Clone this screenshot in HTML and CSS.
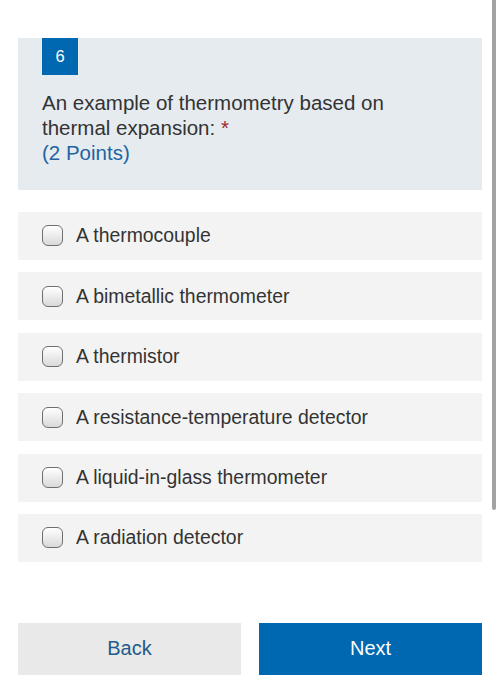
FILE: index.html
```html
<!DOCTYPE html>
<html>
<head>
<meta charset="utf-8">
<link rel="stylesheet" href="styles.css">
</head>
<body>
<div class="page">
  <section class="question">
    <div class="badge">6</div>
    <p class="qtext">An example of thermometry based on thermal expansion: <span class="req">*</span><br><span class="points">(2 Points)</span></p>
  </section>
  <div class="options">
    <label class="option"><span class="box"></span><span class="label">A thermocouple</span></label>
    <label class="option"><span class="box"></span><span class="label">A bimetallic thermometer</span></label>
    <label class="option"><span class="box"></span><span class="label">A thermistor</span></label>
    <label class="option"><span class="box"></span><span class="label">A resistance-temperature detector</span></label>
    <label class="option"><span class="box"></span><span class="label">A liquid-in-glass thermometer</span></label>
    <label class="option"><span class="box"></span><span class="label">A radiation detector</span></label>
  </div>
  <div class="buttons">
    <button class="btn back">Back</button>
    <button class="btn next">Next</button>
  </div>
</div>
<div class="scrollbar"></div>
</body>
</html>
```

FILE: styles.css
```css
html, body {
  margin: 0;
  padding: 0;
  background: #ffffff;
  font-family: "Liberation Sans", Arial, Helvetica, sans-serif;
  color: #333333;
}
.page {
  padding: 38px 18px 0 18px;
  display: flex;
  flex-direction: column;
}
.question {
  background: #e6ebf0;
  padding: 0 44px 24.6px 24px;
}
.badge {
  width: 36px;
  height: 37px;
  background: #0067b1;
  color: #ffffff;
  font-size: 16.5px;
  display: flex;
  align-items: center;
  justify-content: center;
}
.qtext {
  margin: 15.4px 0 0 0;
  font-size: 20.5px;
  line-height: 25px;
  color: #333333;
}
.req {
  color: #a4262c;
}
.points {
  color: #1f64a0;
}
.options {
  margin-top: 22px;
  display: flex;
  flex-direction: column;
  gap: 12.4px;
}
.option {
  height: 48px;
  background: #f3f3f3;
  display: flex;
  align-items: center;
  padding-left: 24px;
  gap: 13px;
}
.box {
  width: 19px;
  height: 19px;
  border: 1.5px solid #6f6f6f;
  border-radius: 6px;
  background: linear-gradient(#ffffff, #d9d9d9);
  box-sizing: content-box;
}
.label {
  font-size: 19.4px;
  color: #333333;
}
.buttons {
  margin-top: 61px;
  display: flex;
  gap: 18px;
}
.btn {
  flex: 1;
  height: 52px;
  border: none;
  font-family: "Liberation Sans", Arial, Helvetica, sans-serif;
  font-size: 20px;
  padding: 0;
}
.back {
  background: #e9e9e9;
  color: #245a8c;
}
.next {
  background: #0067b1;
  color: #ffffff;
}
.scrollbar {
  position: absolute;
  top: 0;
  left: 492px;
  width: 4px;
  height: 510px;
  background: #a3a3a3;
  border-radius: 0 0 2px 2px;
}
```
